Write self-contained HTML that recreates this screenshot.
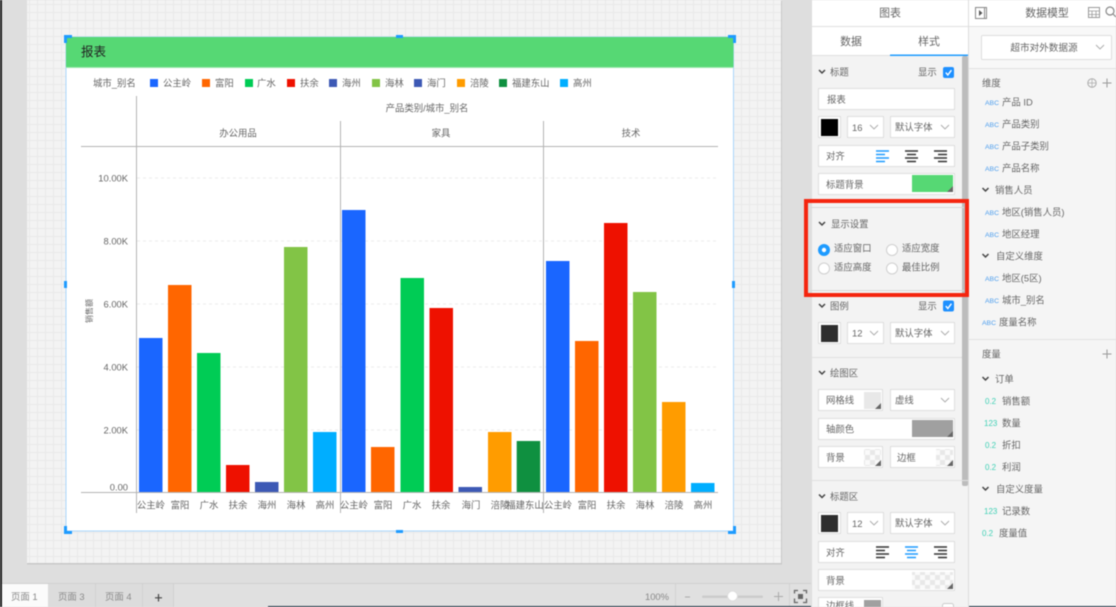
<!DOCTYPE html>
<html lang="zh"><head><meta charset="utf-8"><title>报表</title>
<style>
html,body{margin:0;padding:0;width:1116px;height:607px;overflow:hidden;background:#dedede}
svg{display:block;filter:blur(.5px)}
text{font-family:"Liberation Sans","Noto Sans CJK SC",sans-serif;font-size:9.4px;fill:#666}
.c{text-anchor:middle}.r{text-anchor:end}
.b{fill:#fff;stroke:#dedede;stroke-width:1}
.h{font-size:10.9px}
.ch{fill:none;stroke:#444;stroke-width:1.5}
.sc{fill:none;stroke:#aaa;stroke-width:.9}
.abc{font-size:6.8px;fill:#4d9eee}
.num{font-size:8px;fill:#3fd0b5}
</style></head><body>
<svg width="1116" height="607" viewBox="0 0 1116 607" xmlns="http://www.w3.org/2000/svg">
<defs>
<pattern id="g" x="-2" y="-3" width="8" height="8" patternUnits="userSpaceOnUse"><rect width="8" height="8" fill="#f3f3f3"/><path d="M7.5 0V8M0 7.500H8" stroke="#e9e9e9" stroke-width="1"/></pattern>
<pattern id="k" x="0" y="0" width="10" height="10" patternUnits="userSpaceOnUse"><rect width="10" height="10" fill="#fafafa"/><rect width="5" height="5" fill="#e8e8e8"/><rect x="5" y="5" width="5" height="5" fill="#e8e8e8"/></pattern>
<path id="chev" d="M-3-1.5 0 1.5 3-1.5" class="ch"/>
<path id="sel" d="M-4-2 0 2 4-2" class="sc"/>
<path id="tri" d="M0 0V-6L-6 0Z" fill="#666"/>
<g id="cb"><rect width="11" height="11" rx="2" fill="#1e90ff"/><path d="M2.8 5.6 4.8 8 8.4 3.2" fill="none" stroke="#fff" stroke-width="1.4"/></g>
<g id="al" fill="none" stroke-width="1.6"><path d="M0 0H13M0 3.500H9M0 7H13M0 10.500H9"/></g>
<g id="ac" fill="none" stroke-width="1.6"><path d="M0 0H13M2 3.500H11M0 7H13M2 10.500H11"/></g>
<g id="ar" fill="none" stroke-width="1.6"><path d="M0 0H13M4 3.500H13M0 7H13M4 10.500H13"/></g>
</defs>

<rect width="1116" height="607" fill="#dedede"/>
<rect x="0" y="0" width="2" height="607" fill="#1c1c1c"/>
<rect x="27" y="1" width="755" height="563.500" fill="#c8c8c8"/>
<rect x="27" y="0" width="754" height="563" fill="url(#g)"/>

<!-- chart card -->
<rect x="66" y="37" width="667.5" height="494" fill="#fff" stroke="#a9d6fb" stroke-width="1"/>
<rect x="66" y="37" width="667.5" height="30" fill="#56d874"/>
<rect x="66" y="67" width="667.5" height="1" fill="#9de8ae"/>
<text x="81" y="56" style="font-size:12.5px;fill:#222">报表</text>
<text x="93" y="86.500">城市_别名</text>
<rect x="150" y="79" width="8" height="8" fill="#1a66ff"/><text x="163" y="86.500">公主岭</text>
<rect x="202" y="79" width="8" height="8" fill="#ff6600"/><text x="215" y="86.500">富阳</text>
<rect x="245" y="79" width="8" height="8" fill="#00cc55"/><text x="257" y="86.500">广水</text>
<rect x="287" y="79" width="8" height="8" fill="#ee1100"/><text x="300" y="86.500">扶余</text>
<rect x="329" y="79" width="8" height="8" fill="#3d59b5"/><text x="342" y="86.500">海州</text>
<rect x="372" y="79" width="8" height="8" fill="#82c446"/><text x="385" y="86.500">海林</text>
<rect x="414" y="79" width="8" height="8" fill="#3d59b5"/><text x="427" y="86.500">海门</text>
<rect x="457" y="79" width="8" height="8" fill="#ff9c00"/><text x="470" y="86.500">涪陵</text>
<rect x="499" y="79" width="8" height="8" fill="#0f9040"/><text x="512" y="86.500">福建东山</text>
<rect x="560" y="79" width="8" height="8" fill="#00aeff"/><text x="573" y="86.500">高州</text>

<text x="427" y="111.500" class="c">产品类别/城市_别名</text>
<text x="238" y="136.500" class="c">办公用品</text>
<text x="441" y="136.500" class="c">家具</text>
<text x="631" y="136.500" class="c">技术</text>

<g stroke="#ededed" stroke-dasharray="3 3" stroke-width="1"><path d="M137 178H718M137 241H718M137 304H718M137 367H718M137 430H718"/></g>
<g>
<text x="128" y="181.500" class="r">10.00K</text>
<text x="128" y="244.500" class="r">8.00K</text>
<text x="128" y="307.500" class="r">6.00K</text>
<text x="128" y="370.500" class="r">4.00K</text>
<text x="128" y="433.500" class="r">2.00K</text>
<text x="128" y="490.500" class="r">0.00</text>
</g>
<text x="0" y="0" class="c" transform="translate(92 311) rotate(-90)" style="font-size:8px">销售额</text>

<!-- bars -->
<g>
<rect x="139" y="338" width="23.500" height="154" fill="#1a66ff"/>
<rect x="168" y="285" width="23.500" height="207" fill="#ff6600"/>
<rect x="197" y="353" width="23.500" height="139" fill="#00cc55"/>
<rect x="226" y="465" width="23.500" height="27" fill="#ee1100"/>
<rect x="255" y="482" width="23.500" height="10" fill="#3d59b5"/>
<rect x="284" y="247" width="23.500" height="245" fill="#82c446"/>
<rect x="313" y="432" width="23.500" height="60" fill="#00aeff"/>
<rect x="342" y="210" width="23.500" height="282" fill="#1a66ff"/>
<rect x="371" y="447" width="23.500" height="45" fill="#ff6600"/>
<rect x="400.500" y="278" width="23.500" height="214" fill="#00cc55"/>
<rect x="429.500" y="308" width="23.500" height="184" fill="#ee1100"/>
<rect x="458.500" y="487" width="23.500" height="5" fill="#3d59b5"/>
<rect x="488" y="432" width="23.500" height="60" fill="#ff9c00"/>
<rect x="516.700" y="441" width="23.500" height="51" fill="#0f9040"/>
<rect x="546" y="261" width="23.500" height="231" fill="#1a66ff"/>
<rect x="575" y="341" width="23.500" height="151" fill="#ff6600"/>
<rect x="604" y="223" width="23.500" height="269" fill="#ee1100"/>
<rect x="633" y="292" width="23.500" height="200" fill="#82c446"/>
<rect x="662" y="402" width="23.500" height="90" fill="#ff9c00"/>
<rect x="691" y="483" width="23.500" height="9" fill="#00aeff"/>
</g>
<g stroke="#b4b4b4" stroke-width="1" fill="none">
<path d="M81 146.500H718M81 492.500H718M136.500 96V513M340.500 121V513M543.500 121V513"/>
</g>
<g>
<text x="151" y="508.500" class="c">公主岭</text><text x="180" y="508.500" class="c">富阳</text><text x="209" y="508.500" class="c">广水</text><text x="238" y="508.500" class="c">扶余</text><text x="267" y="508.500" class="c">海州</text><text x="296" y="508.500" class="c">海林</text><text x="325" y="508.500" class="c">高州</text>
<text x="354" y="508.500" class="c">公主岭</text><text x="383" y="508.500" class="c">富阳</text><text x="412" y="508.500" class="c">广水</text><text x="441" y="508.500" class="c">扶余</text><text x="471" y="508.500" class="c">海门</text><text x="500" y="508.500" class="c">涪陵</text><text x="525" y="508.500" class="c">福建东山</text>
<text x="558" y="508.500" class="c">公主岭</text><text x="587" y="508.500" class="c">富阳</text><text x="616" y="508.500" class="c">扶余</text><text x="645" y="508.500" class="c">海林</text><text x="674" y="508.500" class="c">涪陵</text><text x="703" y="508.500" class="c">高州</text>
</g>

<!-- handles -->
<g fill="#1e9bff">
<path d="M64 35H72V38H67V43H64Z"/><path d="M728 35H736V43H733V38H728Z"/>
<path d="M64 526H67V531H72V534H64Z"/><path d="M733 526H736V534H728V531H733Z"/>
<rect x="396" y="35" width="7" height="3"/><rect x="396" y="530" width="7" height="3"/>
<rect x="64" y="281" width="3" height="7"/><rect x="732" y="281" width="3" height="7"/>
</g>

<!-- bottom bar -->
<rect x="2" y="583" width="809" height="24" fill="#e0e0e0"/>
<rect x="48" y="584" width="126" height="23" fill="#dcdcdc"/>
<path d="M2 583.500H811" stroke="#d0d0d0"/>
<rect x="2" y="584" width="46" height="23" fill="#fbfbfb"/>
<path d="M95.500 584V607M142.500 584V607M173.500 584V607M675.500 584V607M789.500 584V607" stroke="#d2d2d2"/>
<text x="11" y="600" style="fill:#888">页面 1</text>
<text x="58" y="600" style="fill:#8a8a8a">页面 3</text>
<text x="105" y="600" style="fill:#8a8a8a">页面 4</text>
<path d="M158.500 594V601.500M155 597.800H162" stroke="#444" stroke-width="1.200"/>
<text x="645" y="600" style="fill:#888">100%</text>
<path d="M685 597H690" stroke="#aaa"/>
<rect x="702" y="595.500" width="61" height="2.500" rx="1" fill="#cbcbcb"/>
<circle cx="732.500" cy="596" r="5" fill="#fff" stroke="#ddd"/>
<path d="M778.500 592V601M774 596.500H783" stroke="#aaa"/>
<path d="M794.500 593.500V590.500H798M803 590.500H806.500V593.500M794.500 598.500V602.500H798M803 602.500H806.500V598.500" fill="none" stroke="#666" stroke-width="1.300"/><rect x="798" y="594" width="5" height="5" fill="#666"/>
<rect x="268" y="606" width="848" height="1" fill="#1c3040"/>

<!-- panel 1 -->
<rect x="811" y="0" width="157" height="607" fill="#f3f3f3"/>
<rect x="811" y="0" width="157" height="55" fill="#fff"/>
<path d="M811.500 0V607M968.500 0V607" stroke="#dcdcdc"/>
<path d="M811 26.500H968M811 55.500H890" stroke="#e0e0e0"/>
<rect x="890" y="54.500" width="78" height="1.500" fill="#1e9bff"/>
<text x="890" y="16.500" class="c h">图表</text>
<text x="851" y="45" class="c h">数据</text>
<text x="929" y="45" class="c h">样式</text>
<rect x="962" y="56" width="6" height="430" rx="2" fill="#bcbcbc"/>

<use href="#chev" x="822" y="71.500"/><text x="830" y="75.500">标题</text>
<text x="918" y="75.500">显示</text><use href="#cb" x="943" y="67"/>
<rect x="818.500" y="88.500" width="136" height="21" class="b"/><text x="827" y="103">报表</text>
<rect x="818.500" y="116.500" width="22" height="21" class="b"/><rect x="821" y="119" width="17" height="17" fill="#000"/>
<rect x="847.500" y="116.500" width="36" height="21" class="b"/><text x="852" y="131">16</text><use href="#sel" x="874" y="127"/>
<rect x="890.500" y="116.500" width="64" height="21" class="b"/><text x="895" y="130.500">默认字体</text><use href="#sel" x="945" y="127"/>
<rect x="818.500" y="145.500" width="136" height="21" class="b"/><text x="826" y="159.500">对齐</text>
<use href="#al" x="876" y="151" stroke="#1e9bff"/><use href="#ac" x="905" y="151" stroke="#333"/><use href="#ar" x="934" y="151" stroke="#333"/>
<rect x="818.500" y="173.500" width="136" height="21" class="b"/><text x="826" y="188">标题背景</text>
<rect x="912" y="175" width="41" height="17" fill="#56d874"/><use href="#tri" x="953" y="192"/>

<path d="M811 207.500H964M811 290.500H964" stroke="#d8d8d8"/>
<use href="#chev" x="822" y="223.500"/><text x="831" y="227.500">显示设置</text>
<circle cx="824" cy="250" r="6" fill="#1e9bff"/><circle cx="824" cy="250" r="2.200" fill="#fff"/>
<circle cx="892" cy="250" r="5.500" fill="#fff" stroke="#cfcfcf"/><circle cx="824" cy="268.500" r="5.500" fill="#fff" stroke="#cfcfcf"/><circle cx="892" cy="268.500" r="5.500" fill="#fff" stroke="#cfcfcf"/>
<text x="834" y="251.500">适应窗口</text><text x="902" y="251.500">适应宽度</text><text x="834" y="270.500">适应高度</text><text x="902" y="270.500">最佳比例</text>

<use href="#chev" x="822" y="305.500"/><text x="830" y="309.500">图例</text>
<text x="918" y="309.500">显示</text><use href="#cb" x="943" y="300.500"/>
<rect x="818.500" y="322.500" width="22" height="21" class="b"/><rect x="821" y="325" width="17" height="17" fill="#2e2e2e"/>
<rect x="847.500" y="322.500" width="36" height="21" class="b"/><text x="852" y="336.500">12</text><use href="#sel" x="874" y="333"/>
<rect x="890.500" y="322.500" width="64" height="21" class="b"/><text x="895" y="336.500">默认字体</text><use href="#sel" x="945" y="333"/>
<path d="M811 357.500H962" stroke="#e0e0e0"/>

<use href="#chev" x="822" y="372.500"/><text x="830" y="376.500">绘图区</text>
<rect x="818.500" y="389.500" width="64" height="21" class="b"/><text x="826" y="403.500">网格线</text><rect x="864" y="392" width="17" height="17" fill="#e8e8e8"/><use href="#tri" x="881" y="409"/>
<rect x="890.500" y="389.500" width="64" height="21" class="b"/><text x="895" y="403.500">虚线</text><use href="#sel" x="945" y="400"/>
<rect x="818.500" y="418.500" width="136" height="21" class="b"/><text x="826" y="432.500">轴颜色</text><rect x="912" y="420" width="41" height="17" fill="#a0a0a0"/><use href="#tri" x="953" y="437"/>
<rect x="818.500" y="446.500" width="64" height="21" class="b"/><text x="826" y="461">背景</text><rect x="864" y="449" width="17" height="17" fill="url(#k)"/><use href="#tri" x="881" y="466"/>
<rect x="890.500" y="446.500" width="64" height="21" class="b"/><text x="897" y="461">边框</text><rect x="936" y="449" width="17" height="17" fill="url(#k)"/><use href="#tri" x="953" y="466"/>
<path d="M811 480.500H968" stroke="#e0e0e0"/>

<use href="#chev" x="822" y="496"/><text x="830" y="500">标题区</text>
<rect x="818.500" y="512.500" width="22" height="21" class="b"/><rect x="821" y="515" width="17" height="17" fill="#2e2e2e"/>
<rect x="847.500" y="512.500" width="36" height="21" class="b"/><text x="852" y="527">12</text><use href="#sel" x="874" y="523"/>
<rect x="890.500" y="512.500" width="64" height="21" class="b"/><text x="895" y="526.500">默认字体</text><use href="#sel" x="945" y="523"/>
<rect x="818.500" y="541.500" width="136" height="21" class="b"/><text x="826" y="556">对齐</text>
<use href="#al" x="876" y="547" stroke="#333"/><use href="#ac" x="905" y="547" stroke="#1e9bff"/><use href="#ar" x="934" y="547" stroke="#333"/>
<rect x="818.500" y="569.500" width="136" height="21" class="b"/><text x="826" y="584">背景</text><rect x="912" y="572" width="41" height="17" fill="url(#k)"/><use href="#tri" x="953" y="589"/>
<rect x="818.500" y="597.500" width="64" height="12" class="b"/><text x="826" y="609">边框线</text><rect x="864" y="600" width="17" height="7" fill="#a0a0a0"/>
<rect x="942.500" y="603.500" width="11" height="6" rx="2" fill="#fff" stroke="#ccc"/>

<!-- red highlight -->
<rect x="806" y="201" width="161" height="94" fill="none" stroke="#f5250f" stroke-width="4"/>

<!-- panel 2 -->
<rect x="969" y="0" width="147" height="606" fill="#f5f5f5"/>
<rect x="969" y="0" width="147" height="26" fill="#fff"/>
<rect x="969" y="27" width="147" height="41" fill="#f8f8f8"/>
<path d="M969 26.500H1116M969 68.500H1116" stroke="#e2e2e2"/>
<rect x="975.500" y="7.500" width="11" height="11" fill="none" stroke="#888"/><path d="M979 10V16L982.500 13Z" fill="#555"/><path d="M984.500 8V18" stroke="#888"/>
<text x="1047" y="16.500" class="c h">数据模型</text>
<rect x="1088.500" y="7.500" width="11" height="10" fill="none" stroke="#999"/><path d="M1088 11H1100M1088 14.500H1100M1092 11V18M1096 11V18" stroke="#999" stroke-width=".8"/>
<circle cx="1110" cy="11" r="4" fill="none" stroke="#888" stroke-width="1.200"/><path d="M1113 14 1116 17" stroke="#888" stroke-width="1.200"/>
<rect x="981.500" y="35.500" width="130" height="24" rx="1" class="b"/><text x="1044" y="51" class="c" style="font-size:9.6px">超市对外数据源</text><use href="#sel" x="1100" y="47"/>

<text x="982" y="86.500">维度</text>
<circle cx="1092" cy="83" r="4.200" fill="none" stroke="#aaa"/><path d="M1087.800 83H1096.200M1092 78.800V87.200" stroke="#aaa" stroke-width=".7"/>
<path d="M1107 78.500V87.500M1102.500 83H1111.500" stroke="#999"/>

<g>
<text x="985" y="105" class="abc">ABC</text><text x="1002" y="105.500">产品 ID</text>
<text x="985" y="127" class="abc">ABC</text><text x="1002" y="127.500">产品类别</text>
<text x="985" y="149" class="abc">ABC</text><text x="1002" y="149.500">产品子类别</text>
<text x="985" y="171" class="abc">ABC</text><text x="1002" y="171.500">产品名称</text>
<use href="#chev" x="985.500" y="189.500"/><text x="995" y="193.500">销售人员</text>
<text x="985" y="215" class="abc">ABC</text><text x="1002" y="215.500">地区(销售人员)</text>
<text x="985" y="237" class="abc">ABC</text><text x="1002" y="237.500">地区经理</text>
<use href="#chev" x="985.500" y="255.500"/><text x="996" y="259.500">自定义维度</text>
<text x="985" y="281" class="abc">ABC</text><text x="1002" y="281.500">地区(5区)</text>
<text x="985" y="303" class="abc">ABC</text><text x="1002" y="303.500">城市_别名</text>
<text x="982" y="325" class="abc">ABC</text><text x="999" y="325.500">度量名称</text>
</g>
<path d="M969 339.500H1116" stroke="#e2e2e2"/>
<text x="982" y="357.500">度量</text>
<path d="M1107 349.500V358.500M1102.500 354H1111.500" stroke="#999"/>
<use href="#chev" x="985.500" y="378.500"/><text x="995" y="382.500">订单</text>
<text x="985" y="404" class="num">0.2</text><text x="1002" y="404.500">销售额</text>
<text x="984" y="426" class="num">123</text><text x="1002" y="426.500">数量</text>
<text x="985" y="448" class="num">0.2</text><text x="1002" y="448.500">折扣</text>
<text x="985" y="470" class="num">0.2</text><text x="1002" y="470.500">利润</text>
<use href="#chev" x="985.500" y="488.500"/><text x="996" y="492.500">自定义度量</text>
<text x="984" y="514" class="num">123</text><text x="1002" y="514.500">记录数</text>
<text x="982" y="536" class="num">0.2</text><text x="999" y="536.500">度量值</text>
</svg>
</body></html>
